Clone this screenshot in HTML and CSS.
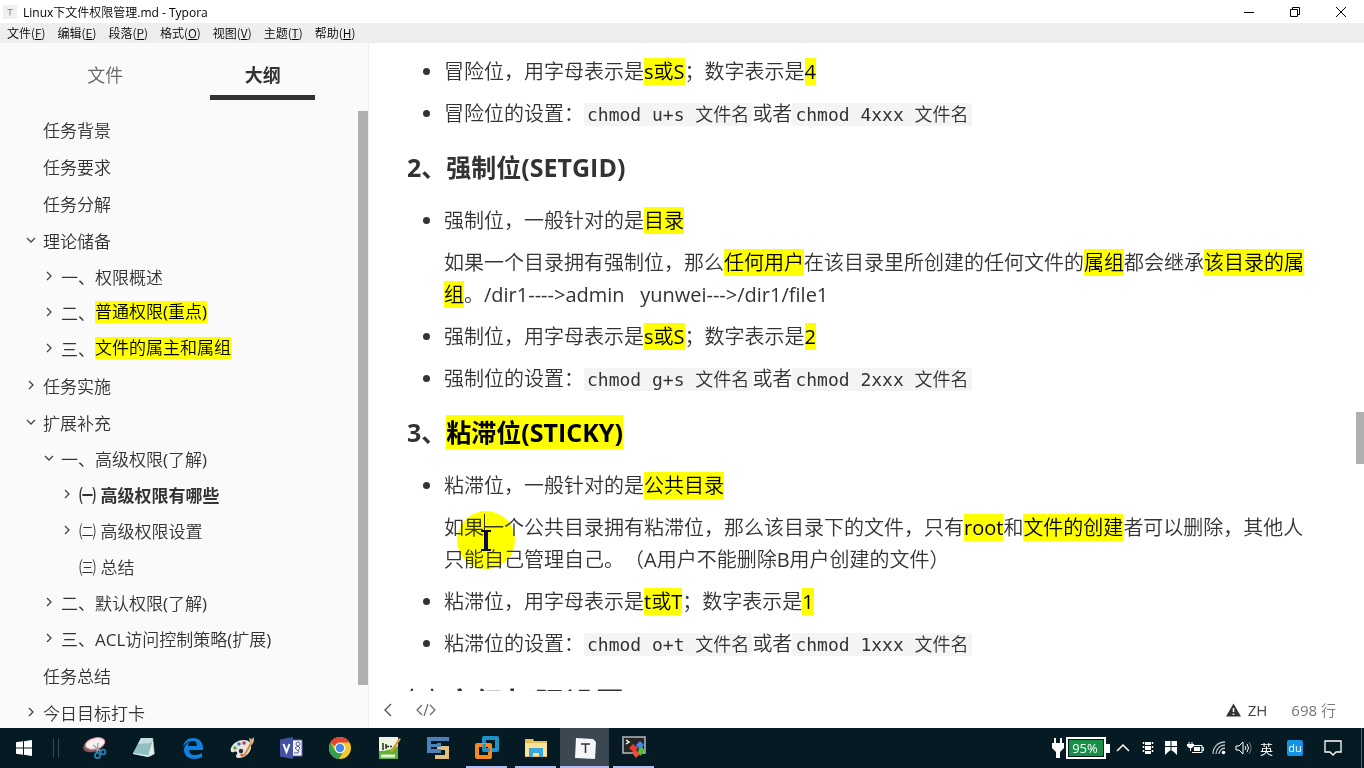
FILE: index.html
```html
<!DOCTYPE html>
<html lang="zh-CN">
<head>
<meta charset="utf-8">
<meta name="viewport" content="width=device-width, initial-scale=1">
<title>Linux下文件权限管理.md - Typora</title>
<link rel="stylesheet" href="styles.css">
</head>
<body>
<svg class="defs" aria-hidden="true">
  <symbol id="open" viewBox="0 0 10 10"><path d="M1 3l4 4 4-4" fill="none" stroke="currentColor" stroke-width="1.3"/></symbol>
  <symbol id="closed" viewBox="0 0 10 10"><path d="M3 1l4 4-4 4" fill="none" stroke="currentColor" stroke-width="1.3"/></symbol>
</svg>

<header class="titlebar">
  <svg class="app-icon" viewBox="0 0 14 14"><rect width="14" height="14" rx="1" fill="#f0f0f0"/><path d="M4.500 4.500h5M7 4.500v6" stroke="#888" fill="none"/></svg>
  <span class="title">Linux下文件权限管理.md - Typora</span>
  <div class="window-buttons">
    <button class="window-button" aria-label="最小化"><svg viewBox="0 0 12 12"><path d="M1 6.5h10" stroke="#000" fill="none"/></svg></button>
    <button class="window-button" aria-label="还原"><svg viewBox="0 0 12 12"><path d="M1.5 3.5h7v7h-7zM3.500 3.500v-2h7v7h-2" stroke="#000" fill="none"/></svg></button>
    <button class="window-button" aria-label="关闭"><svg viewBox="0 0 12 12"><path d="M1 1l10 10M11 1L1 11" stroke="#000" fill="none"/></svg></button>
  </div>
</header>

<nav class="menubar" aria-label="菜单">
  <button>文件(<u>F</u>)</button>
  <button>编辑(<u>E</u>)</button>
  <button>段落(<u>P</u>)</button>
  <button>格式(<u>O</u>)</button>
  <button>视图(<u>V</u>)</button>
  <button>主题(<u>T</u>)</button>
  <button>帮助(<u>H</u>)</button>
</nav>

<div class="workspace">
  <aside class="sidebar">
    <div class="tabs">
      <button class="tab">文件</button>
      <button class="tab tab-active">大纲</button>
    </div>
    <div class="outline-area">
      <nav class="outline" aria-label="大纲">
        <ul class="tree">
          <li><a class="leaf" href="#">任务背景</a></li>
          <li><a class="leaf" href="#">任务要求</a></li>
          <li><a class="leaf" href="#">任务分解</a></li>
          <li><a href="#"><svg><use href="#open"/></svg>理论储备</a>
            <ul>
              <li><a href="#"><svg><use href="#closed"/></svg>一、权限概述</a></li>
              <li><a href="#"><svg><use href="#closed"/></svg>二、<mark>普通权限(重点)</mark></a></li>
              <li><a href="#"><svg><use href="#closed"/></svg>三、<mark>文件的属主和属组</mark></a></li>
            </ul>
          </li>
          <li><a href="#"><svg><use href="#closed"/></svg>任务实施</a></li>
          <li><a href="#"><svg><use href="#open"/></svg>扩展补充</a>
            <ul>
              <li><a href="#"><svg><use href="#open"/></svg>一、高级权限(了解)</a>
                <ul>
                  <li><a class="current" href="#"><svg><use href="#closed"/></svg>㈠ 高级权限有哪些</a></li>
                  <li><a href="#"><svg><use href="#closed"/></svg>㈡ 高级权限设置</a></li>
                  <li><a class="leaf" href="#">㈢ 总结</a></li>
                </ul>
              </li>
              <li><a href="#"><svg><use href="#closed"/></svg>二、默认权限(了解)</a></li>
              <li><a href="#"><svg><use href="#closed"/></svg>三、ACL访问控制策略(扩展)</a></li>
            </ul>
          </li>
          <li><a class="leaf" href="#">任务总结</a></li>
          <li><a href="#"><svg><use href="#closed"/></svg>今日目标打卡</a></li>
        </ul>
      </nav>
      <div class="side-scroll"><div class="side-thumb"></div></div>
    </div>
  </aside>

  <section class="editor">
    <div class="page-area">
      <article class="page">
        <ul class="notes">
          <li>冒险位，用字母表示是<mark>s或S</mark>；数字表示是<mark>4</mark></li>
          <li>冒险位的设置：<code>chmod u+s 文件名</code>或者<code>chmod 4xxx 文件名</code></li>
        </ul>
        <h4>2、强制位(SETGID)</h4>
        <ul class="notes">
          <li>
            <p>强制位，一般针对的是<mark>目录</mark></p>
            <p>如果一个目录拥有强制位，那么<mark>任何用户</mark>在该目录里所创建的任何文件的<mark>属组</mark>都会继承<mark>该目录的属组</mark>。/dir1----&gt;admin&nbsp;&nbsp; yunwei---&gt;/dir1/file1</p>
          </li>
          <li>强制位，用字母表示是<mark>s或S</mark>；数字表示是<mark>2</mark></li>
          <li>强制位的设置：<code>chmod g+s 文件名</code>或者<code>chmod 2xxx 文件名</code></li>
        </ul>
        <h4>3、<mark>粘滞位(STICKY)</mark></h4>
        <ul class="notes">
          <li>
            <p>粘滞位，一般针对的是<mark>公共目录</mark></p>
            <p>如果<span class="caret"><svg class="pointer" viewBox="0 0 60 60" aria-hidden="true"><circle cx="30" cy="30" r="29" fill="#ff0"/><path d="M25 21h4l1 1 1-1h4M25 40h4l1-1 1 1h4" stroke="#0a0a18" stroke-width="2" fill="none"/><path d="M30 22v17" stroke="#0a0a50" stroke-width="4"/></svg></span>一个公共目录拥有粘滞位，那么该目录下的文件，只有<mark>root</mark>和<mark>文件的创建</mark>者可以删除，其他人只能自己管理自己。（A用户不能删除B用户创建的文件）</p>
          </li>
          <li>粘滞位，用字母表示是<mark>t或T</mark>；数字表示是<mark>1</mark></li>
          <li>粘滞位的设置：<code>chmod o+t 文件名</code>或者<code>chmod 1xxx 文件名</code></li>
        </ul>
        <h3>㈡ 高级权限设置</h3>
      </article>
      <div class="page-scroll"><div class="page-thumb"></div></div>
    </div>
    <footer class="statusbar">
      <button aria-label="隐藏侧边栏"><svg class="back" viewBox="0 0 10 14"><path d="M8 1L2 7l6 6" fill="none" stroke="#555" stroke-width="1.4"/></svg></button>
      <button aria-label="源代码模式"><svg class="source" viewBox="0 0 20 14"><path d="M6 2L1 7l5 5M14 2l5 5-5 5M12 1L8 13" fill="none" stroke="#666" stroke-width="1.200"/></svg></button>
      <button class="lang"><svg class="warn" viewBox="0 0 15 14"><path d="M7.500 0.500L15 13.500H0z" fill="#333"/><path d="M7.500 5v4M7.500 10.500v1.500" stroke="#fff" stroke-width="1.500"/></svg>ZH</button>
      <button class="lines">698 行</button>
    </footer>
  </section>
</div>

<footer class="taskbar">
  <button class="start" aria-label="开始"><svg viewBox="0 0 16 16"><path d="M0 2.300l7-1V7.500H0zM8 1.200L16 0v7.500H8zM0 8.500h7v6.200l-7-1zM8 8.500h8V16l-8-1.200z" fill="#fff"/></svg></button>
  <span class="grip"></span>
  <div class="apps">
    <button class="app" aria-label="截图工具"><svg viewBox="0 0 24 24"><ellipse cx="10" cy="10" rx="10" ry="6" fill="#8b5960" transform="rotate(-14 10 10)"/><ellipse cx="12" cy="7.500" rx="10" ry="5.500" fill="#f6eef0" stroke="#d88a92" transform="rotate(-14 12 7)"/><path d="M10 9l8 7M15 7l-1 10" stroke="#9ab" stroke-width="1.500"/><circle cx="14.500" cy="19.500" r="2.600" fill="none" stroke="#2482b5" stroke-width="1.800"/><circle cx="20" cy="16" r="2.400" fill="none" stroke="#2482b5" stroke-width="1.800"/></svg></button>
    <button class="app" aria-label="记事本"><svg viewBox="0 0 24 24"><path d="M9 2h12l2 16-6 3L1 18z" fill="#6d8f91"/><path d="M9 2h12l-5 17L1 17z" fill="#8fbfc0"/><path d="M9 2h12l-2 5-13 1z" fill="#c4dfdf"/><path d="M21 3l1 15-6 3 1-5z" fill="#e4ecec"/><path d="M1 17l15 2v2L1 18z" fill="#dceeed"/></svg></button>
    <button class="app" aria-label="Edge"><svg viewBox="0 0 24 24"><path d="M2 11C3 5 7 2 12 2c6 0 10 4 10 10v2H8c0 3 3 5 6 5 3 0 5-1 7-2v4c-2 1-4 2-8 2-6 0-10-4-10-9 0-4 3-7 6-8-1 1-2 2-2 4h9c0-3-1-5-4-5-4 0-8 2-10 6z" fill="#0f82dd"/></svg></button>
    <button class="app" aria-label="画图"><svg viewBox="0 0 24 24"><path d="M14 4c5 0 8 3 7 8-1 6-7 10-12 10-3 0-4-2-2-4 1-2-1-3-3-2-3 1-4-1-3-4C3 7 8 4 14 4z" fill="#e9e3dc"/><circle cx="5" cy="12" r="1.800" fill="#4fae52"/><circle cx="9" cy="8" r="1.800" fill="#3577cf"/><circle cx="14" cy="7" r="1.800" fill="#b03c62"/><circle cx="11" cy="15" r="2.200" fill="#243038"/><circle cx="12" cy="19" r="1.600" fill="#d65d2b"/><path d="M13 20l7-13 2 1-7 12z" fill="#d68b32"/><path d="M20 7l-1-5 3 1 2-2v4l-2 4z" fill="#d9b07a"/></svg></button>
    <button class="app" aria-label="Visio"><svg viewBox="0 0 24 24"><path d="M13 4h10v16H13z" fill="#f4f6fb" stroke="#6069b5"/><circle cx="19" cy="8" r="2" fill="none" stroke="#4b56a5"/><path d="M19 10l-3 2 3 3 2-3zM15 17h4l1-2" fill="none" stroke="#4b56a5"/><path d="M1 3.500L14 1v22L1 20.500z" fill="#4452a6"/><path d="M4.500 8l3 8 3-8" fill="none" stroke="#fff" stroke-width="2"/></svg></button>
    <button class="app" aria-label="Chrome"><svg viewBox="0 0 24 24"><circle cx="12" cy="12" r="11" fill="#f6c927"/><path d="M2.500 6.500a11 11 0 0 1 19 0H12a5.500 5.500 0 0 0-5.200 4z" fill="#e54335"/><path d="M2.500 6.500A11 11 0 0 0 11 23l5-8.500a5.500 5.500 0 0 1-9 0z" fill="#34a04e"/><circle cx="12" cy="12" r="5.300" fill="#fff"/><circle cx="12" cy="12" r="4.200" fill="#4587ef"/></svg></button>
    <button class="app" aria-label="EverEdit"><svg viewBox="0 0 24 24"><path d="M2 1h19v22H2z" fill="#eef5e2"/><path d="M2 15c7 0 14-2 19-5v13H2z" fill="#60b236"/><path d="M4 20h14" stroke="#e4f5d3" stroke-width="3"/><path d="M6 7v7M9 10.500h3M13 10.500h2M9 8v5" stroke="#26331c" stroke-width="1.500"/><path d="M14 14l8-12 2 1-8 12-3 2z" fill="#d79a32"/></svg></button>
    <button class="app" aria-label="终端工具"><svg viewBox="0 0 24 24"><path d="M11 10h12v13H9v-4h10v-5h-8z" fill="#e2c080"/><path d="M1 1h22v4H5v2h10v4H5v2h10v4H1z" fill="#4d82b8"/><path d="M5 7h6v1H5z" fill="#061a24"/></svg></button>
    <button class="app running" aria-label="VMware"><svg viewBox="0 0 24 24"><path d="M9 2h13v12H9z" fill="none" stroke="#2192c8" stroke-width="4" stroke-linejoin="round"/><path d="M2 9h13v12H2z" fill="none" stroke="#f38a1d" stroke-width="4" stroke-linejoin="round"/><path d="M9 8v6h6" fill="none" stroke="#2192c8" stroke-width="3"/></svg></button>
    <button class="app running" aria-label="文件资源管理器"><svg viewBox="0 0 24 24"><path d="M1 3h8l1 2h13v16H1z" fill="#e8bd56"/><path d="M1 7h22v13H1z" fill="#f9e39b"/><path d="M5 12h14v9h-4v-4H9v4H5z" fill="#39a8dc"/></svg></button>
    <button class="app running active" aria-label="Typora"><svg viewBox="0 0 24 24"><path d="M3 2l17 1 3 3-1 17-20-1z" fill="#f5f6f7"/><path d="M8 8h9M12.500 8v9" fill="none" stroke="#333" stroke-width="1.500"/></svg></button>
    <button class="app running" aria-label="MobaXterm"><svg viewBox="0 0 24 24"><path d="M1 1h22v16H1z" fill="#262626" stroke="#b4b9bc" stroke-width="1.500"/><path d="M4 4l3 2-3 2" fill="none" stroke="#fff" stroke-width="1.500"/><path d="M7 12l4-4 5 4-4 5z" fill="#e63a32"/><path d="M14 9l4-4 4 4-4 5z" fill="#4186e8"/><path d="M10 17l4-3 4 4-4 4z" fill="#ef4d31"/><path d="M16 14l4-3 3 4-5 5z" fill="#58bf3d"/></svg></button>
  </div>
  <div class="tray">
    <svg class="battery" viewBox="0 0 58 24" aria-hidden="true"><path d="M3 2v6M9 2v6" stroke="#fff" stroke-width="2"/><path d="M0 7h12v5l-4 4v6H4v-6l-4-4z" fill="#fff"/><rect x="15" y="2" width="38" height="20" fill="#061a24" stroke="#fff" stroke-width="2"/><rect x="17" y="4" width="34" height="16" fill="#169047"/><path d="M54 8h4v9h-4z" fill="#fff"/></svg>
    <span class="charge">95%</span>
    <svg class="t-up" viewBox="0 0 14 14"><path d="M1 10l6-6 6 6" fill="none" stroke="#fff" stroke-width="1.500"/></svg>
    <svg class="t-icon" viewBox="0 0 14 14"><path d="M4 1h6v12H4z" fill="#fff"/><path d="M2.500 1v12M11.500 1v12" stroke="#fff" stroke-width="1.500" stroke-dasharray="2 2"/><path d="M4 4.500h6M4 9.500h6" stroke="#061a24"/></svg>
    <svg class="t-icon" viewBox="0 0 14 14"><path d="M1 0h12v14l-3-3-3-2-3 2-3 3z" fill="#fff"/><path d="M7 0v9M1 5.500h12" stroke="#061a24"/></svg>
    <svg class="t-wide" viewBox="0 0 17 14"><path d="M2 1v3M5 1v3" stroke="#fff"/><path d="M0 3h7v2L5 7H2L0 5zM3 6h1v4H3z" fill="#fff"/><path d="M7 4.500h8v7H5M15 6.500h1.500v3H15" fill="none" stroke="#fff"/><path d="M7 6h6v4H7z" fill="#fff"/></svg>
    <svg class="t-icon" viewBox="0 0 14 14"><path d="M1 13C1 6 6 1 13 1M4 13c0-5 4-9 9-9M7 13c0-3 3-6 6-6" fill="none" stroke="#bcc6cb" stroke-width="1.300"/><circle cx="11.500" cy="11.500" r="1.800" fill="#fff"/></svg>
    <svg class="t-wide" viewBox="0 0 17 14"><path d="M1 5h3l4-4v12L4 9H1z" fill="none" stroke="#fff"/><path d="M10 5q2 2 0 4M12 3q3 4 0 8" fill="none" stroke="#fff"/><path d="M14 1q4 6 0 12" fill="none" stroke="#6b7980"/></svg>
    <span class="ime">英</span>
    <span class="du">du</span>
    <button class="notice" aria-label="通知"><svg viewBox="0 0 18 18"><path d="M1 2h16v11h-5l-3 3-3-3H1z" fill="none" stroke="#fff" stroke-width="1.300"/></svg></button>
  </div>
</footer>
</body>
</html>
```
FILE: styles.css
```css
* { box-sizing: border-box; }

body {
  margin: 0;
  height: 100vh;
  display: flex;
  flex-direction: column;
  overflow: hidden;
  background: #fff;
  color: #333;
  font-family: "Open Sans", "Noto Sans CJK SC DemiLight", "Noto Sans CJK SC Light", "Noto Sans CJK SC", sans-serif;
  text-spacing-trim: space-all;
}

button {
  margin: 0;
  padding: 0;
  border: 0;
  background: none;
  color: inherit;
  font: inherit;
}

svg { display: block; flex: none; }
mark { background: #ff0; color: #000; }
.defs { display: none; }

/* Title bar and menus */
.titlebar {
  flex: none;
  display: flex;
  align-items: center;
  gap: 6px;
  height: 23px;
  padding-left: 3px;
  color: #000;
  font-size: 12px;
}
.app-icon { width: 14px; height: 14px; }
.title { flex: 1; }
.window-buttons { display: flex; }
.window-button {
  width: 46px;
  height: 20px;
  display: grid;
  place-items: center;
}
.window-button svg { width: 12px; height: 12px; }

.menubar {
  flex: none;
  display: flex;
  gap: 12px;
  height: 20px;
  padding-left: 7px;
  align-items: center;
  background: #eee;
  color: #000;
  font-size: 12px;
  line-height: 20px;
  font-family: "Noto Sans CJK SC DemiLight", "Noto Sans CJK SC", sans-serif;
}

/* Sidebar */
.workspace { flex: 1; min-height: 0; display: flex; }
.sidebar {
  flex: none;
  width: 369px;
  display: flex;
  flex-direction: column;
  border-right: 1px solid #eee;
  background: #fafafa;
}
.tabs {
  flex: none;
  display: flex;
  justify-content: space-evenly;
  padding: 8px 0 11px;
}
.tab {
  width: 105px;
  height: 49px;
  padding-top: 2px;
  border-bottom: 5px solid transparent;
  color: #666;
  font-size: 18px;
}
.tab-active { border-color: #333; color: #333; }

.tab-active, .current, h3, h4 {
  font-family: "Open Sans", "Noto Sans CJK SC", sans-serif;
  font-weight: 700;
}

.outline-area { flex: 1; min-height: 0; display: flex; }
.outline { flex: 1; overflow: hidden; font-size: 17px; }
.outline ul { margin: 0; padding: 0 0 0 18px; list-style: none; }
.outline .tree { display: grid; gap: 1px; padding-left: 26px; }
.outline a {
  display: flex;
  align-items: center;
  height: 36px;
  color: inherit;
  text-decoration: none;
  white-space: pre;
}
.outline a svg { width: 10px; height: 10px; margin-right: 7px; color: #444; }
.outline .leaf { padding-left: 17px; }
.outline mark { line-height: 22px; }

.side-scroll { flex: none; width: 10px; }
.side-thumb { height: 93%; background: #b0b0b0; }

/* Document */
.editor { flex: 1; min-width: 0; display: flex; flex-direction: column; }
.page-area { flex: 1; min-height: 0; display: flex; }
.page {
  flex: 1;
  min-width: 0;
  overflow: hidden;
  padding: 13px 44px 0 38px;
  font-size: 20px;
  line-height: 32px;
}
.notes { display: grid; gap: 10px; margin: 0; padding-left: 37px; }
.notes p { margin: 0 0 10px; }
.notes p:last-child { margin-bottom: 0; }
h4 { margin: 20px 0; font-size: 25px; line-height: 35px; }
h3 { margin: 24px 0; font-size: 30px; line-height: 37px; }

code {
  padding: 0 2px;
  border: 1px solid #f3f4f4;
  border-radius: 3px;
  background: #f3f4f4;
  font-family: "DejaVu Sans Mono", "Noto Sans CJK SC DemiLight", "Noto Sans CJK SC Light", "Noto Sans CJK SC", monospace;
  font-size: 18px;
  line-height: 20px;
}

.caret { position: relative; border-left: 1px solid #333; margin-right: -1px; }
.pointer {
  position: absolute;
  left: -29px;
  top: -4px;
  width: 60px;
  height: 60px;
  mix-blend-mode: multiply;
}

.page-scroll { flex: none; width: 8px; }
.page-scroll::before { content: ""; display: block; height: 57%; }
.page-thumb { height: 8%; background: #b0b0b0; }

.statusbar {
  flex: none;
  display: flex;
  align-items: center;
  height: 37px;
  padding: 0 28px 0 14px;
  color: #777;
  font-size: 15px;
}
.back { width: 10px; height: 14px; }
.source { width: 20px; height: 14px; margin-left: 23px; }
.lang { display: flex; align-items: center; gap: 7px; margin-left: auto; color: #444; }
.warn { width: 15px; height: 14px; }
.lines { margin-left: 24px; }

/* Taskbar */
.taskbar {
  flex: none;
  display: flex;
  height: 40px;
  padding-right: 2px;
  background: #061a24;
  color: #fff;
}
.start { width: 48px; display: grid; place-items: center; }
.start svg { width: 16px; height: 16px; }
.grip {
  width: 6px;
  height: 18px;
  margin: 11px 11px 11px 5px;
  flex: none;
  border: solid #3a4a52;
  border-width: 0 1px;
}
.apps { display: flex; flex: 1; }
.app {
  width: 49px;
  display: grid;
  place-items: center;
  border: solid transparent;
  border-width: 0 4px;
}
.app svg { width: 24px; height: 24px; }
.running { background: linear-gradient(#b3bdf0, #b3bdf0) bottom / 100% 2px no-repeat padding-box; }
.active { border-width: 0; background-color: #3c4851; }

.tray { display: flex; align-items: center; flex: none; border-right: 1px solid #59666d; }
.battery { width: 58px; height: 24px; }
.charge {
  width: 38px;
  margin-left: -44px;
  margin-right: 6px;
  text-align: center;
  font-size: 13px;
  z-index: 1;
}
.t-up { width: 14px; height: 14px; margin: 0 11px 0 6px; }
.t-icon { width: 14px; height: 14px; margin-right: 9px; }
.t-wide { width: 17px; height: 14px; margin-right: 8px; }
.ime { font-size: 13px; font-family: "Noto Sans CJK SC", sans-serif; }
.du {
  width: 16px;
  margin: 0 21px 0 14px;
  border-radius: 2px;
  background: #1492e6;
  font-size: 11px;
  line-height: 16px;
  text-align: center;
}
.notice { margin-right: 19px; }
.notice svg { width: 18px; height: 18px; }
```
